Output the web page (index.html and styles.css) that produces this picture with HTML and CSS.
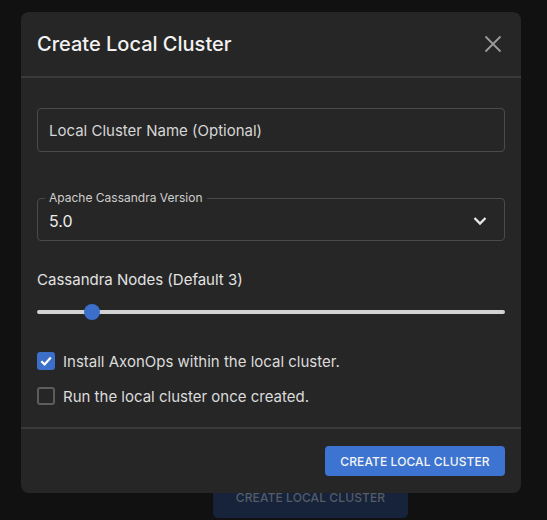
FILE: index.html
```html
<!DOCTYPE html>
<html lang="en">
<head>
<meta charset="utf-8">
<title>Create Local Cluster</title>
<link rel="stylesheet" href="styles.css">
</head>
<body>
<div class="page">
  <button class="bg-button" type="button">CREATE LOCAL CLUSTER</button>
</div>
<div class="dialog" role="dialog">
  <div class="dialog-header">
    <h2 class="dialog-title">Create Local Cluster</h2>
    <button class="close-btn" type="button" aria-label="Close">
      <svg width="18" height="18" viewBox="0 0 18 18"><path d="M1.5 1.5 L16.5 16.5 M16.5 1.5 L1.5 16.5" stroke="#9b9b9b" stroke-width="1.8" fill="none"/></svg>
    </button>
  </div>
  <div class="dialog-content">
    <div class="field">
      <span class="placeholder">Local Cluster Name (Optional)</span>
    </div>
    <div class="field select">
      <span class="notch-label">Apache Cassandra Version</span>
      <span class="value">5.0</span>
      <svg class="chevron" width="14" height="10" viewBox="0 0 14 10"><path d="M1.5 2 L7 7.5 L12.5 2" stroke="#e6e6e6" stroke-width="2.4" fill="none"/></svg>
    </div>
    <div class="slider-label">Cassandra Nodes (Default 3)</div>
    <div class="slider">
      <div class="track"></div>
      <div class="thumb" style="left: 55px"></div>
    </div>
    <div class="checks">
      <label class="check-row">
        <span class="box checked">
          <svg width="14" height="14" viewBox="0 0 14 14"><path d="M2.3 7.2 L5.6 10.4 L11.8 3.4" stroke="#fff" stroke-width="2.2" fill="none"/></svg>
        </span>
        <span class="check-text">Install AxonOps within the local cluster.</span>
      </label>
      <label class="check-row">
        <span class="box"></span>
        <span class="check-text">Run the local cluster once created.</span>
      </label>
    </div>
  </div>
  <div class="dialog-actions">
    <button class="primary-btn" type="button">CREATE LOCAL CLUSTER</button>
  </div>
</div>
</body>
</html>
```

FILE: styles.css
```css
* { box-sizing: border-box; }
html, body {
  margin: 0;
  height: 520px;
  overflow: hidden;
  background: #111111;
  font-family: Inter, "Noto Sans", sans-serif;
  color: #e8e8e8;
}
.page {
  display: flex;
  justify-content: flex-start;
  padding: 476px 0 0 213px;
}
.bg-button {
  width: 195px;
  height: 42px;
  border: none;
  border-radius: 5px;
  background: #16233a;
  color: #575c66;
  font-family: Inter, sans-serif;
  font-size: 12px;
  font-weight: 500;
  letter-spacing: 0.1px;
  padding: 0;
}
.dialog {
  position: absolute;
  left: 21px;
  top: 12px;
  width: 500px;
  height: 481px;
  background: #262626;
  border-radius: 8px;
  display: flex;
  flex-direction: column;
}
.dialog-header {
  display: flex;
  align-items: center;
  justify-content: space-between;
  padding: 16px 16px 16px 16px;
  height: 66px;
  border-bottom: 2px solid #3a3a3a;
}
.dialog-title {
  margin: 0;
  font-size: 20px;
  line-height: 32px;
  font-weight: 500;
  color: #f2f2f2;
}
.close-btn {
  width: 24px;
  height: 24px;
  padding: 0;
  border: none;
  background: none;
  display: flex;
  align-items: center;
  justify-content: center;
}
.dialog-content {
  padding: 30px 16px 0 16px;
  height: 351px;
  border-bottom: 2px solid #3a3a3a;
}
.field {
  height: 44px;
  border: 1px solid #4a4a4a;
  border-radius: 4px;
  display: flex;
  align-items: center;
  padding: 0 12px 0 11px;
  position: relative;
}
.placeholder {
  font-size: 15px;
  color: #d6d6d6;
}
.select {
  margin-top: 46px;
  height: 43px;
  justify-content: space-between;
  padding-top: 2px;
}
.notch-label {
  position: absolute;
  left: 7px;
  top: -9px;
  padding: 0 4px;
  background: #262626;
  font-size: 12px;
  line-height: 16px;
  color: #cfcfcf;
}
.value {
  font-size: 16px;
  color: #ececec;
}
.chevron {
  margin-right: 5px;
  margin-top: 1px;
}
.slider-label {
  margin-top: 29px;
  font-size: 15px;
  line-height: 20px;
  color: #e2e2e2;
}
.slider {
  position: relative;
  height: 20px;
  margin-top: 12px;
}
.track {
  position: absolute;
  left: 0;
  right: 0;
  top: 8px;
  height: 4px;
  background: #d3d3d3;
  border-radius: 2px;
}
.thumb {
  position: absolute;
  top: 2px;
  width: 16px;
  height: 16px;
  margin-left: -8px;
  border-radius: 50%;
  background: #3b6fc9;
}
.checks {
  margin-top: 30px;
  display: flex;
  flex-direction: column;
  gap: 17px;
}
.check-row {
  display: flex;
  align-items: center;
  gap: 8px;
  height: 18px;
}
.box {
  width: 18px;
  height: 18px;
  border: 2px solid #5c5c5c;
  border-radius: 3px;
  display: flex;
  align-items: center;
  justify-content: center;
}
.box.checked {
  background: #3b6fc9;
  border-color: #3b6fc9;
}
.check-text {
  font-size: 15px;
  color: #dcdcdc;
}
.dialog-actions {
  display: flex;
  justify-content: flex-end;
  padding: 17px 16px 0 16px;
}
.primary-btn {
  width: 180px;
  height: 30px;
  border: none;
  border-radius: 4px;
  background: #3d74d1;
  color: #f4f4f4;
  font-family: Inter, sans-serif;
  font-size: 12px;
  font-weight: 500;
  letter-spacing: 0.1px;
  padding: 0;
}
```
